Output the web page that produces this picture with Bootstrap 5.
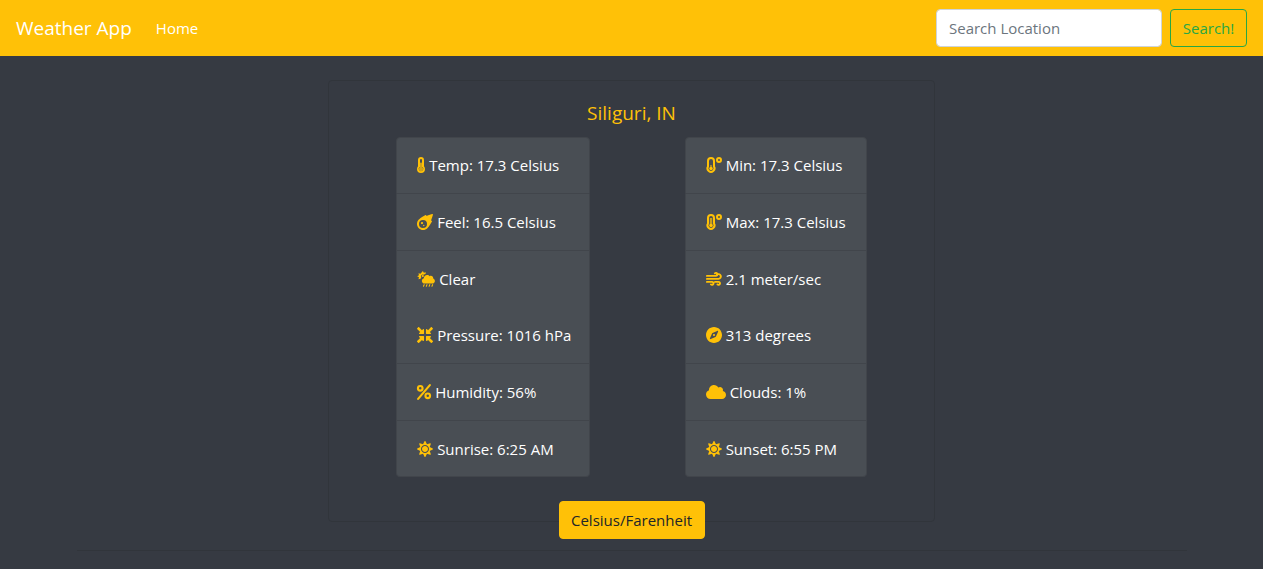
<!DOCTYPE html>
<html lang="en">
<head>
<meta charset="utf-8">
<meta name="viewport" content="width=device-width, initial-scale=1">
<title>Weather App</title>
<link href="https://cdn.jsdelivr.net/npm/bootstrap@5.3.0/dist/css/bootstrap.min.css" rel="stylesheet">
<style>
  body { background: #363a42; font-family: "Open Sans", "Noto Sans", sans-serif; font-size: 15px; line-height: 24px; }
  .topbar { background: #ffc107; min-height: 56px; }
  .topbar .navbar-brand { font-size: 19px; line-height: 30px; }
  .topbar .form-control { width: 226px; height: 38px; font-size: 15px; border-color: #ced4da; border-radius: 4px; color: #495057; }
  .topbar .form-control::placeholder { color: #6c757d; }
  .btn { font-size: 15px; height: 38px; border-radius: 4px; white-space: nowrap; }
  .btn-search { --bs-btn-color: #28a745; --bs-btn-border-color: #28a745; --bs-btn-hover-color: #fff; --bs-btn-hover-bg: #28a745; width: 77px; padding: 6px 0; }
  .weather { max-width: 607px; background: transparent; border: 1px solid #31353b; border-radius: 4px; --bs-card-spacer-y: 20px; --bs-card-spacer-x: 20px; }
  .city { color: #ffc107; font-size: 19px; line-height: 24px; margin-bottom: 12px; }
  .readings { --bs-list-group-bg: #494e54; --bs-list-group-color: #fff; --bs-list-group-border-color: #41454b; --bs-list-group-border-radius: 4px; }
  .readings .list-group-item { padding: 16px 16px 16px 20px; white-space: nowrap; }
  .readings .list-group-item:first-child { padding-top: 15px; }
  .readings .list-group-item:last-child { padding-bottom: 15px; }
  .readings .joined { border-bottom: 0; }
  .readings-main { min-width: 194px; }
  .readings-more { min-width: 182px; }
  .glyph { height: 16px; fill: #ffc107; vertical-align: -2px; overflow: visible; }
  .glyph .line { fill: none; stroke: #ffc107; stroke-linecap: round; stroke-linejoin: round; }
  .unit-row { height: 0; margin-top: 24px; }
  .btn-unit { width: 146px; padding: 6px 0; color: #212529; }
  .divider { max-width: 1110px; margin: 28px auto 16px; border-top: 1px solid #31353b; opacity: 1; }
</style>
</head>
<body>
<svg class="d-none" aria-hidden="true">
  <symbol id="sun" viewBox="0 0 512 512"><path d="M256 160c-52.900 0-96 43.100-96 96s43.100 96 96 96 96-43.100 96-96-43.100-96-96-96zm246.400 80.500l-94.700-47.300 33.500-100.400c4.500-13.600-8.400-26.500-21.900-21.900l-100.400 33.500-47.400-94.800c-6.400-12.800-24.600-12.800-31 0l-47.300 94.700L92.700 70.800c-13.600-4.500-26.500 8.400-21.900 21.900l33.500 100.400-94.700 47.400c-12.800 6.400-12.800 24.600 0 31l94.700 47.300-33.500 100.500c-4.500 13.600 8.400 26.500 21.900 21.900l100.400-33.500 47.300 94.700c6.400 12.800 24.600 12.800 31 0l47.300-94.700 100.400 33.500c13.600 4.500 26.500-8.400 21.900-21.900l-33.500-100.400 94.700-47.300c13-6.500 13-24.700.2-31.100zm-155.900 106c-49.900 49.900-131.100 49.900-181 0-49.900-49.900-49.900-131.100 0-181 49.900-49.900 131.100-49.900 181 0 49.900 49.900 49.900 131.100 0 181z"/></symbol>
</svg>

<nav class="topbar navbar navbar-expand navbar-dark py-0 px-3">
  <a class="navbar-brand text-white p-0 me-3" href="#">Weather App</a>
  <ul class="navbar-nav me-auto">
    <li class="nav-item"><a class="nav-link text-white px-2" href="#">Home</a></li>
  </ul>
  <form class="d-flex gap-2">
    <input class="form-control" type="search" placeholder="Search Location" aria-label="Search Location">
    <button class="btn btn-search" type="submit">Search!</button>
  </form>
</nav>

<main class="px-3">
  <section class="card weather mx-auto mt-4">
    <div class="card-body">
      <h1 class="city text-center fw-normal">Siliguri, IN</h1>
      <div class="d-flex flex-wrap justify-content-around">
        <ul class="list-group readings readings-main">
          <li class="list-group-item"><svg class="glyph" width="8" viewBox="0 0 256 512"><path fill-rule="evenodd" d="M224 299c20 23 32 53 32 85a128 128 0 0 1-256 0c0-32 12-62 32-85V96a96 96 0 0 1 192 0zM96 96v224a70 70 0 1 0 64 0V96a32 32 0 0 0-64 0z"/><path d="M128 176c18 0 32 12 32 28v124a64 64 0 1 1-64 0V204c0-16 14-28 32-28z" opacity=".75"/></svg> Temp: 17.3 Celsius</li>
          <li class="list-group-item"><svg class="glyph" width="16" viewBox="0 0 512 512"><path fill-rule="evenodd" d="M491 1C452 12 379 35 303 63l-6-19c-3-10-14-14-23-9C233 56 122 116 61 176l-4 3c-76 76-76 200 0 276s200 76 276 0l3-4c60-61 120-172 142-213 4-9 0-20-10-23l-19-6c28-76 51-150 62-188 3-12-8-23-20-20zM192 192a128 128 0 1 1 0 256 128 128 0 0 1 0-256z"/><circle cx="160" cy="288" r="36"/><circle cx="216" cy="368" r="22"/></svg> Feel: 16.5 Celsius</li>
          <li class="list-group-item joined"><svg class="glyph" width="18" viewBox="0 0 576 512"><path d="M510 225c1-5 2-11 2-17 0-44-36-80-80-80-18 0-34 6-47 16-22-29-56-48-97-48-66 0-120 54-120 120v5c-43 14-72 53-72 99 0 53 43 96 96 96h288c53 0 96-43 96-96 0-47-28-84-66-95z" transform="translate(72 42) scale(.870)"/><path fill-rule="evenodd" d="M188 0l32 56 62-18-9 54c-20 4-39 13-55 26a62 62 0 0 0-81 90c-10 12-17 25-22 39l-67 17 15-63-58-34 58-34-16-63 63 17z"/><circle cx="184" cy="158" r="34"/><path class="line" stroke-width="34" d="M230 437l-22 52m112-52l-22 52m112-52l-22 52m112-52l-22 52"/></svg> Clear</li>
          <li class="list-group-item"><svg class="glyph" width="16" viewBox="0 0 512 512"><path d="M210 288H88c-22 0-30 22-17 36l31 31-99 96c-5 5-5 12 0 17l41 41c5 5 12 5 17 0l98-97 31 32c14 13 36 5 36-17V304c0-9-7-16-16-16zM302 224h122c22 0 30-22 17-36l-31-31 99-96c5-5 5-12 0-17L468 3c-5-5-12-5-17 0l-98 97-31-32c-14-13-36-5-36 17v123c0 9 7 16 16 16zM302 288c-9 0-16 7-16 16v123c0 22 22 30 36 17l31-32 98 97c5 5 12 5 17 0l41-41c5-5 5-12 0-17l-99-96 31-31c13-14 5-36-17-36zM190 68l-31 32L61 3c-5-5-12-5-17 0L3 44c-5 5-5 12 0 17l99 96-31 31c-13 14-5 36 17 36h122c9 0 16-7 16-16V85c0-22-22-30-36-17z"/></svg> Pressure: 1016 hPa</li>
          <li class="list-group-item"><svg class="glyph" width="14" viewBox="0 0 448 512"><g class="line" stroke-width="68"><circle cx="104" cy="136" r="74"/><circle cx="344" cy="376" r="74"/><path d="M412 36L36 476"/></g></svg> Humidity: 56%</li>
          <li class="list-group-item"><svg class="glyph" width="16"><use href="#sun"/></svg> Sunrise: 6:25 AM</li>
        </ul>
        <ul class="list-group readings readings-more">
          <li class="list-group-item"><svg class="glyph" width="16" viewBox="0 0 512 512"><path class="line" stroke-width="64" d="M64 304V128a96 96 0 0 1 192 0V304a112 112 0 1 1-192 0z"/><circle cx="160" cy="368" r="56"/><path d="M144 256h32v112h-32z"/><circle class="line" cx="416" cy="96" r="64" stroke-width="64"/></svg> Min: 17.3 Celsius</li>
          <li class="list-group-item"><svg class="glyph" width="16" viewBox="0 0 512 512"><path class="line" stroke-width="64" d="M64 304V128a96 96 0 0 1 192 0V304a112 112 0 1 1-192 0z"/><circle cx="160" cy="368" r="56"/><path d="M120 128h80v240h-80z" opacity=".7"/><circle class="line" cx="416" cy="96" r="64" stroke-width="64"/></svg> Max: 17.3 Celsius</li>
          <li class="list-group-item joined"><svg class="glyph" width="16" viewBox="0 0 512 512"><path class="line" stroke-width="62" d="M30 160H318a48 48 0 1 0-34-82M30 256H400a76 76 0 1 0-54-130M30 352H192a48 48 0 1 1-34 82M288 352H400a48 48 0 1 1-34 82" transform="translate(0 -4)"/></svg> 2.1 meter/sec</li>
          <li class="list-group-item"><svg class="glyph" width="16" viewBox="0 8 496 496"><path d="M225.380 233.370c-12.500 12.500-12.500 32.760 0 45.250 12.490 12.500 32.760 12.500 45.250 0 12.500-12.500 12.500-32.760 0-45.250-12.500-12.490-32.760-12.490-45.250 0zM248 8C111.030 8 0 119.030 0 256s111.030 248 248 248 248-111.030 248-248S384.970 8 248 8zm126.140 148.050L308.170 300.400a31.938 31.938 0 0 1-15.770 15.770l-144.340 65.970c-16.650 7.610-33.810-9.550-26.200-26.200l65.980-144.350a31.938 31.938 0 0 1 15.770-15.770l144.340-65.970c16.650-7.600 33.800 9.550 26.190 26.200z"/></svg> 313 degrees</li>
          <li class="list-group-item"><svg class="glyph" width="20" viewBox="0 0 640 512"><path d="M537.600 226.600c4.100-10.700 6.400-22.400 6.400-34.600 0-53-43-96-96-96-19.700 0-38.100 6-53.300 16.200C367 64.200 315.300 32 256 32c-88.400 0-160 71.600-160 160 0 2.700.1 5.400.2 8.100C40.200 219.800 0 273.200 0 336c0 79.500 64.500 144 144 144h368c70.700 0 128-57.300 128-128 0-61.900-44-113.600-102.400-125.400z"/></svg> Clouds: 1%</li>
          <li class="list-group-item"><svg class="glyph" width="16"><use href="#sun"/></svg> Sunset: 6:55 PM</li>
        </ul>
      </div>
      <div class="unit-row text-center">
        <button class="btn btn-warning btn-unit" type="button">Celsius/Farenheit</button>
      </div>
    </div>
  </section>
  <hr class="divider">
</main>
<script src="https://cdn.jsdelivr.net/npm/bootstrap@5.3.0/dist/js/bootstrap.bundle.min.js"></script>
</body>
</html>
